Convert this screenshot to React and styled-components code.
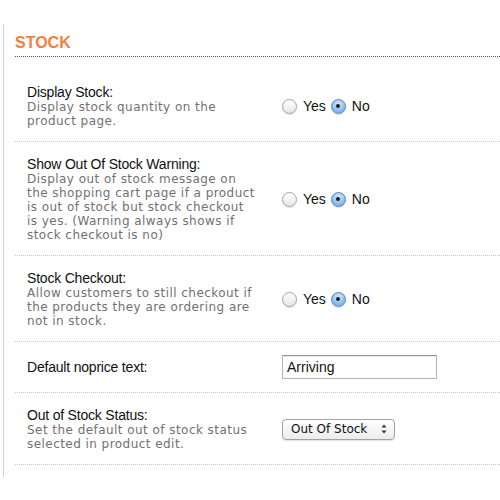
import React from "react";
import styled, { createGlobalStyle } from "styled-components";

const GlobalStyle = createGlobalStyle`
  html, body {
    margin: 0;
    padding: 0;
    background: #fff;
  }
  body {
    font-family: "Liberation Sans", Arial, sans-serif;
    color: #111;
  }
`;

const Page = styled.div`
  width: 500px;
  height: 500px;
  padding-top: 24px;
  box-sizing: border-box;
  overflow: hidden;
`;

const Section = styled.div`
  margin-left: 3px;
  border-left: 1px solid #d4d4d4;
  padding: 9px 0 12px 11px;
`;

const Heading = styled.h2`
  margin: 0 0 13px;
  padding-bottom: 4px;
  font-family: "Liberation Sans", Arial, sans-serif;
  font-size: 16px;
  line-height: 19px;
  font-weight: bold;
  color: #f2813f;
  border-bottom: 1px dotted #555;
`;

const Row = styled.div`
  display: grid;
  grid-template-columns: 255px 1fr;
  align-items: center;
  padding: ${(p) => (p.$compact ? "13px 0 13px 12px" : "14px 0 13px 12px")};
  border-bottom: 1px dotted #c8c8c8;
`;

const Info = styled.div`
  display: flex;
  flex-direction: column;
`;

const Label = styled.div`
  font-size: 14px;
  line-height: 16px;
  letter-spacing: -0.2px;
  color: #111;
`;

const DescLine = styled.div`
  font-family: "DejaVu Sans", Verdana, sans-serif;
  font-size: 12px;
  line-height: 14px;
  letter-spacing: 0.45px;
  white-space: nowrap;
  color: #717171;
`;

const Choices = styled.div`
  display: flex;
  align-items: center;
`;

const Choice = styled.label`
  display: flex;
  align-items: center;
  gap: 6px;
  margin-right: 5px;
  font-size: 14px;
  color: #111;
`;

const Radio = styled.span`
  position: relative;
  width: 15px;
  height: 15px;
  border-radius: 50%;
  box-sizing: border-box;
  border: 1px solid ${(p) => (p.$checked ? "#5a86b8" : "#a4a4a4")};
  background: ${(p) =>
    p.$checked
      ? "radial-gradient(circle at 50% 30%, #d6ebfd 0%, #8fc0f0 55%, #6aa6e6 100%)"
      : "linear-gradient(#ffffff, #e6e6e6)"};
  box-shadow: 0 1px 1px rgba(0, 0, 0, 0.12);

  &::after {
    content: "";
    display: ${(p) => (p.$checked ? "block" : "none")};
    position: absolute;
    left: 50%;
    top: 50%;
    width: 4px;
    height: 4px;
    margin: -2px 0 0 -2px;
    border-radius: 50%;
    background: #1a1a1a;
  }
`;

const TextInput = styled.div`
  width: 155px;
  height: 24px;
  box-sizing: border-box;
  border: 1px solid #b4b4b4;
  border-top-color: #8f8f8f;
  box-shadow: inset 0 1px 1px rgba(0, 0, 0, 0.08);
  padding: 0 4px;
  font-size: 14px;
  line-height: 22px;
  color: #111;
`;

const Select = styled.div`
  display: flex;
  align-items: center;
  justify-content: space-between;
  width: 113px;
  height: 21px;
  box-sizing: border-box;
  padding: 0 7px 0 8px;
  border: 1px solid #a2a2a2;
  border-radius: 4px;
  background: linear-gradient(#ffffff, #ececec);
  box-shadow: 0 1px 1px rgba(0, 0, 0, 0.12);
  font-family: "DejaVu Sans", Verdana, sans-serif;
  font-size: 12px;
  color: #111;
`;

const YesNo = () => (
  <Choices>
    <Choice>
      <Radio />
      Yes
    </Choice>
    <Choice>
      <Radio $checked />
      No
    </Choice>
  </Choices>
);

const Arrows = () => (
  <svg width="6" height="10" viewBox="0 0 6 10">
    <path d="M3 0.5 L5.5 3.5 H0.5 Z" fill="#333" />
    <path d="M3 9.5 L5.5 6.5 H0.5 Z" fill="#333" />
  </svg>
);

const rows = [
  {
    label: "Display Stock:",
    desc: ["Display stock quantity on the", "product page."],
    control: <YesNo />,
  },
  {
    label: "Show Out Of Stock Warning:",
    desc: [
      "Display out of stock message on",
      "the shopping cart page if a product",
      "is out of stock but stock checkout",
      "is yes. (Warning always shows if",
      "stock checkout is no)",
    ],
    control: <YesNo />,
  },
  {
    label: "Stock Checkout:",
    desc: [
      "Allow customers to still checkout if",
      "the products they are ordering are",
      "not in stock.",
    ],
    control: <YesNo />,
  },
  {
    label: "Default noprice text:",
    compact: true,
    control: <TextInput>Arriving</TextInput>,
  },
  {
    label: "Out of Stock Status:",
    desc: ["Set the default out of stock status", "selected in product edit."],
    control: (
      <Select>
        <span>Out Of Stock</span>
        <Arrows />
      </Select>
    ),
  },
];

const App = () => {
  return (
    <Page>
      <GlobalStyle />
      <Section>
        <Heading>STOCK</Heading>
        {rows.map((r) => (
          <Row key={r.label} $compact={r.compact}>
            <Info>
              <Label>{r.label}</Label>
              {r.desc && r.desc.map((line) => <DescLine key={line}>{line}</DescLine>)}
            </Info>
            <div>{r.control}</div>
          </Row>
        ))}
      </Section>
    </Page>
  );
};

export default App;
